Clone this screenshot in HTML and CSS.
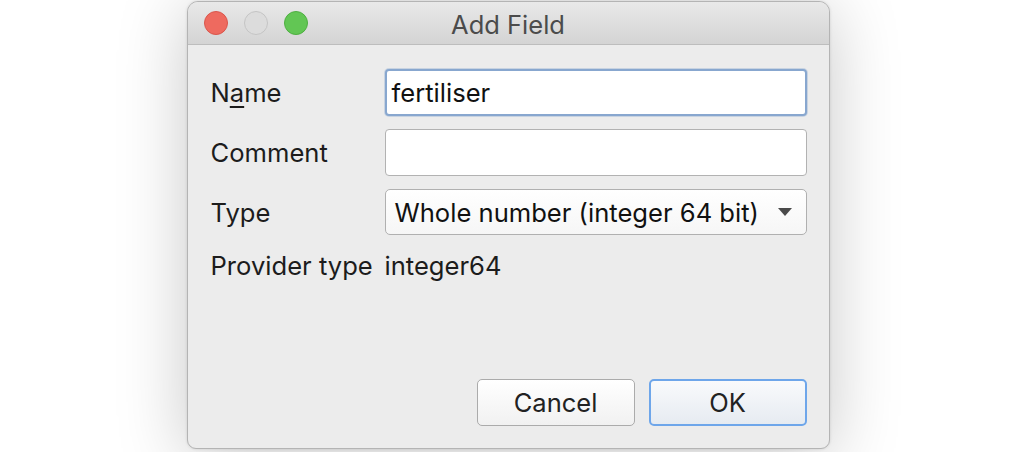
FILE: index.html
```html
<!DOCTYPE html>
<html>
<head>
<meta charset="utf-8">
<link rel="stylesheet" href="styles.css">
</head>
<body>
<div class="window">
  <div class="titlebar">
    <div class="lights">
      <span class="light red"></span>
      <span class="light gray"></span>
      <span class="light green"></span>
    </div>
    <div class="title">Add Field</div>
  </div>
  <div class="content">
    <div class="form">
      <label class="label">N<span class="mnemonic">a</span>me</label>
      <div class="input focused">fertiliser</div>
      <label class="label">Comment</label>
      <div class="input"></div>
      <label class="label">Type</label>
      <div class="select">
        <span>Whole number (integer 64 bit)</span>
        <svg class="arrow" width="14" height="8" viewBox="0 0 14 8"><path d="M0 0 H14 L7 8 Z" fill="#4a4a4a"/></svg>
      </div>
      <div class="label provider">Provider type</div>
      <div class="value provider">integer64</div>
    </div>
    <div class="buttons">
      <button class="btn">Cancel</button>
      <button class="btn default">OK</button>
    </div>
  </div>
</div>
</body>
</html>
```

FILE: styles.css
```css
* { box-sizing: border-box; }
html, body { margin: 0; padding: 0; }
body {
  width: 1014px;
  height: 452px;
  background: #ffffff;
  display: flex;
  justify-content: center;
  align-items: flex-start;
  padding-top: 1px;
  padding-left: 2px;
  font-family: "Inter", "Liberation Sans", sans-serif;
  color: #1c1c1c;
  overflow: hidden;
}
.window {
  width: 643px;
  height: 448px;
  border: 1px solid #b4b4b4;
  border-radius: 11px 11px 9px 9px;
  background: #ececec;
  box-shadow: 0 8px 70px rgba(0,0,0,0.22), 0 0 3px rgba(0,0,0,0.12);
  display: flex;
  flex-direction: column;
  overflow: hidden;
}
.titlebar {
  height: 43px;
  flex: none;
  background: linear-gradient(#e9e9e9, #d4d4d4);
  border-bottom: 1px solid #bdbdbd;
  display: flex;
  align-items: center;
  position: relative;
}
.lights {
  display: flex;
  gap: 16px;
  padding-left: 16px;
}
.light {
  width: 24px;
  height: 24px;
  border-radius: 50%;
  display: block;
}
.light.red { background: #ee6a5f; border: 1px solid #d9564c; }
.light.gray { background: #dcdcdc; border: 1px solid #c4c4c4; }
.light.green { background: #62c654; border: 1px solid #4eaf41; }
.title {
  position: absolute;
  left: 0;
  right: 0;
  top: 7px;
  text-align: center;
  font-size: 25.5px;
  color: #4b4b4b;
  pointer-events: none;
}
.content {
  flex: 1;
  display: flex;
  flex-direction: column;
  padding: 24px 22px 22px 23px;
}
.form {
  display: grid;
  grid-template-columns: 174px 1fr;
  row-gap: 13px;
  align-items: center;
  font-size: 25.6px;
}
.label { color: #1c1c1c; }
.mnemonic {
  text-decoration: underline;
  text-underline-offset: 4px;
  text-decoration-thickness: 1.5px;
}
.input {
  height: 47px;
  background: #ffffff;
  border: 1.5px solid #b2b2b2;
  border-radius: 4px;
  padding: 0 5px;
  display: flex;
  align-items: center;
  color: #111;
}
.input.focused {
  border: 2px solid #88a7cf;
  box-shadow: 0 0 0 1px rgba(136,167,207,0.35);
}
.select {
  height: 46px;
  background: linear-gradient(#ffffff, #f6f6f6);
  border: 1.5px solid #b0b0b0;
  border-radius: 5px;
  padding: 0 14px 0 9px;
  display: flex;
  align-items: center;
  justify-content: space-between;
  color: #111;
}
.arrow { display: block; margin-top: -1px; }
.provider { margin-top: 2px; }
.value { color: #1c1c1c; }
.buttons {
  margin-top: auto;
  display: flex;
  justify-content: flex-end;
  gap: 14px;
}
.btn {
  width: 158px;
  height: 47px;
  font-family: inherit;
  font-size: 25.5px;
  color: #222;
  background: linear-gradient(#ffffff, #f1f1f1);
  border: 1.5px solid #ababab;
  border-radius: 5px;
  padding: 0;
}
.btn.default {
  border: 2px solid #6ea6ea;
  background: linear-gradient(#f9fafc, #e6ebf1);
}
```
